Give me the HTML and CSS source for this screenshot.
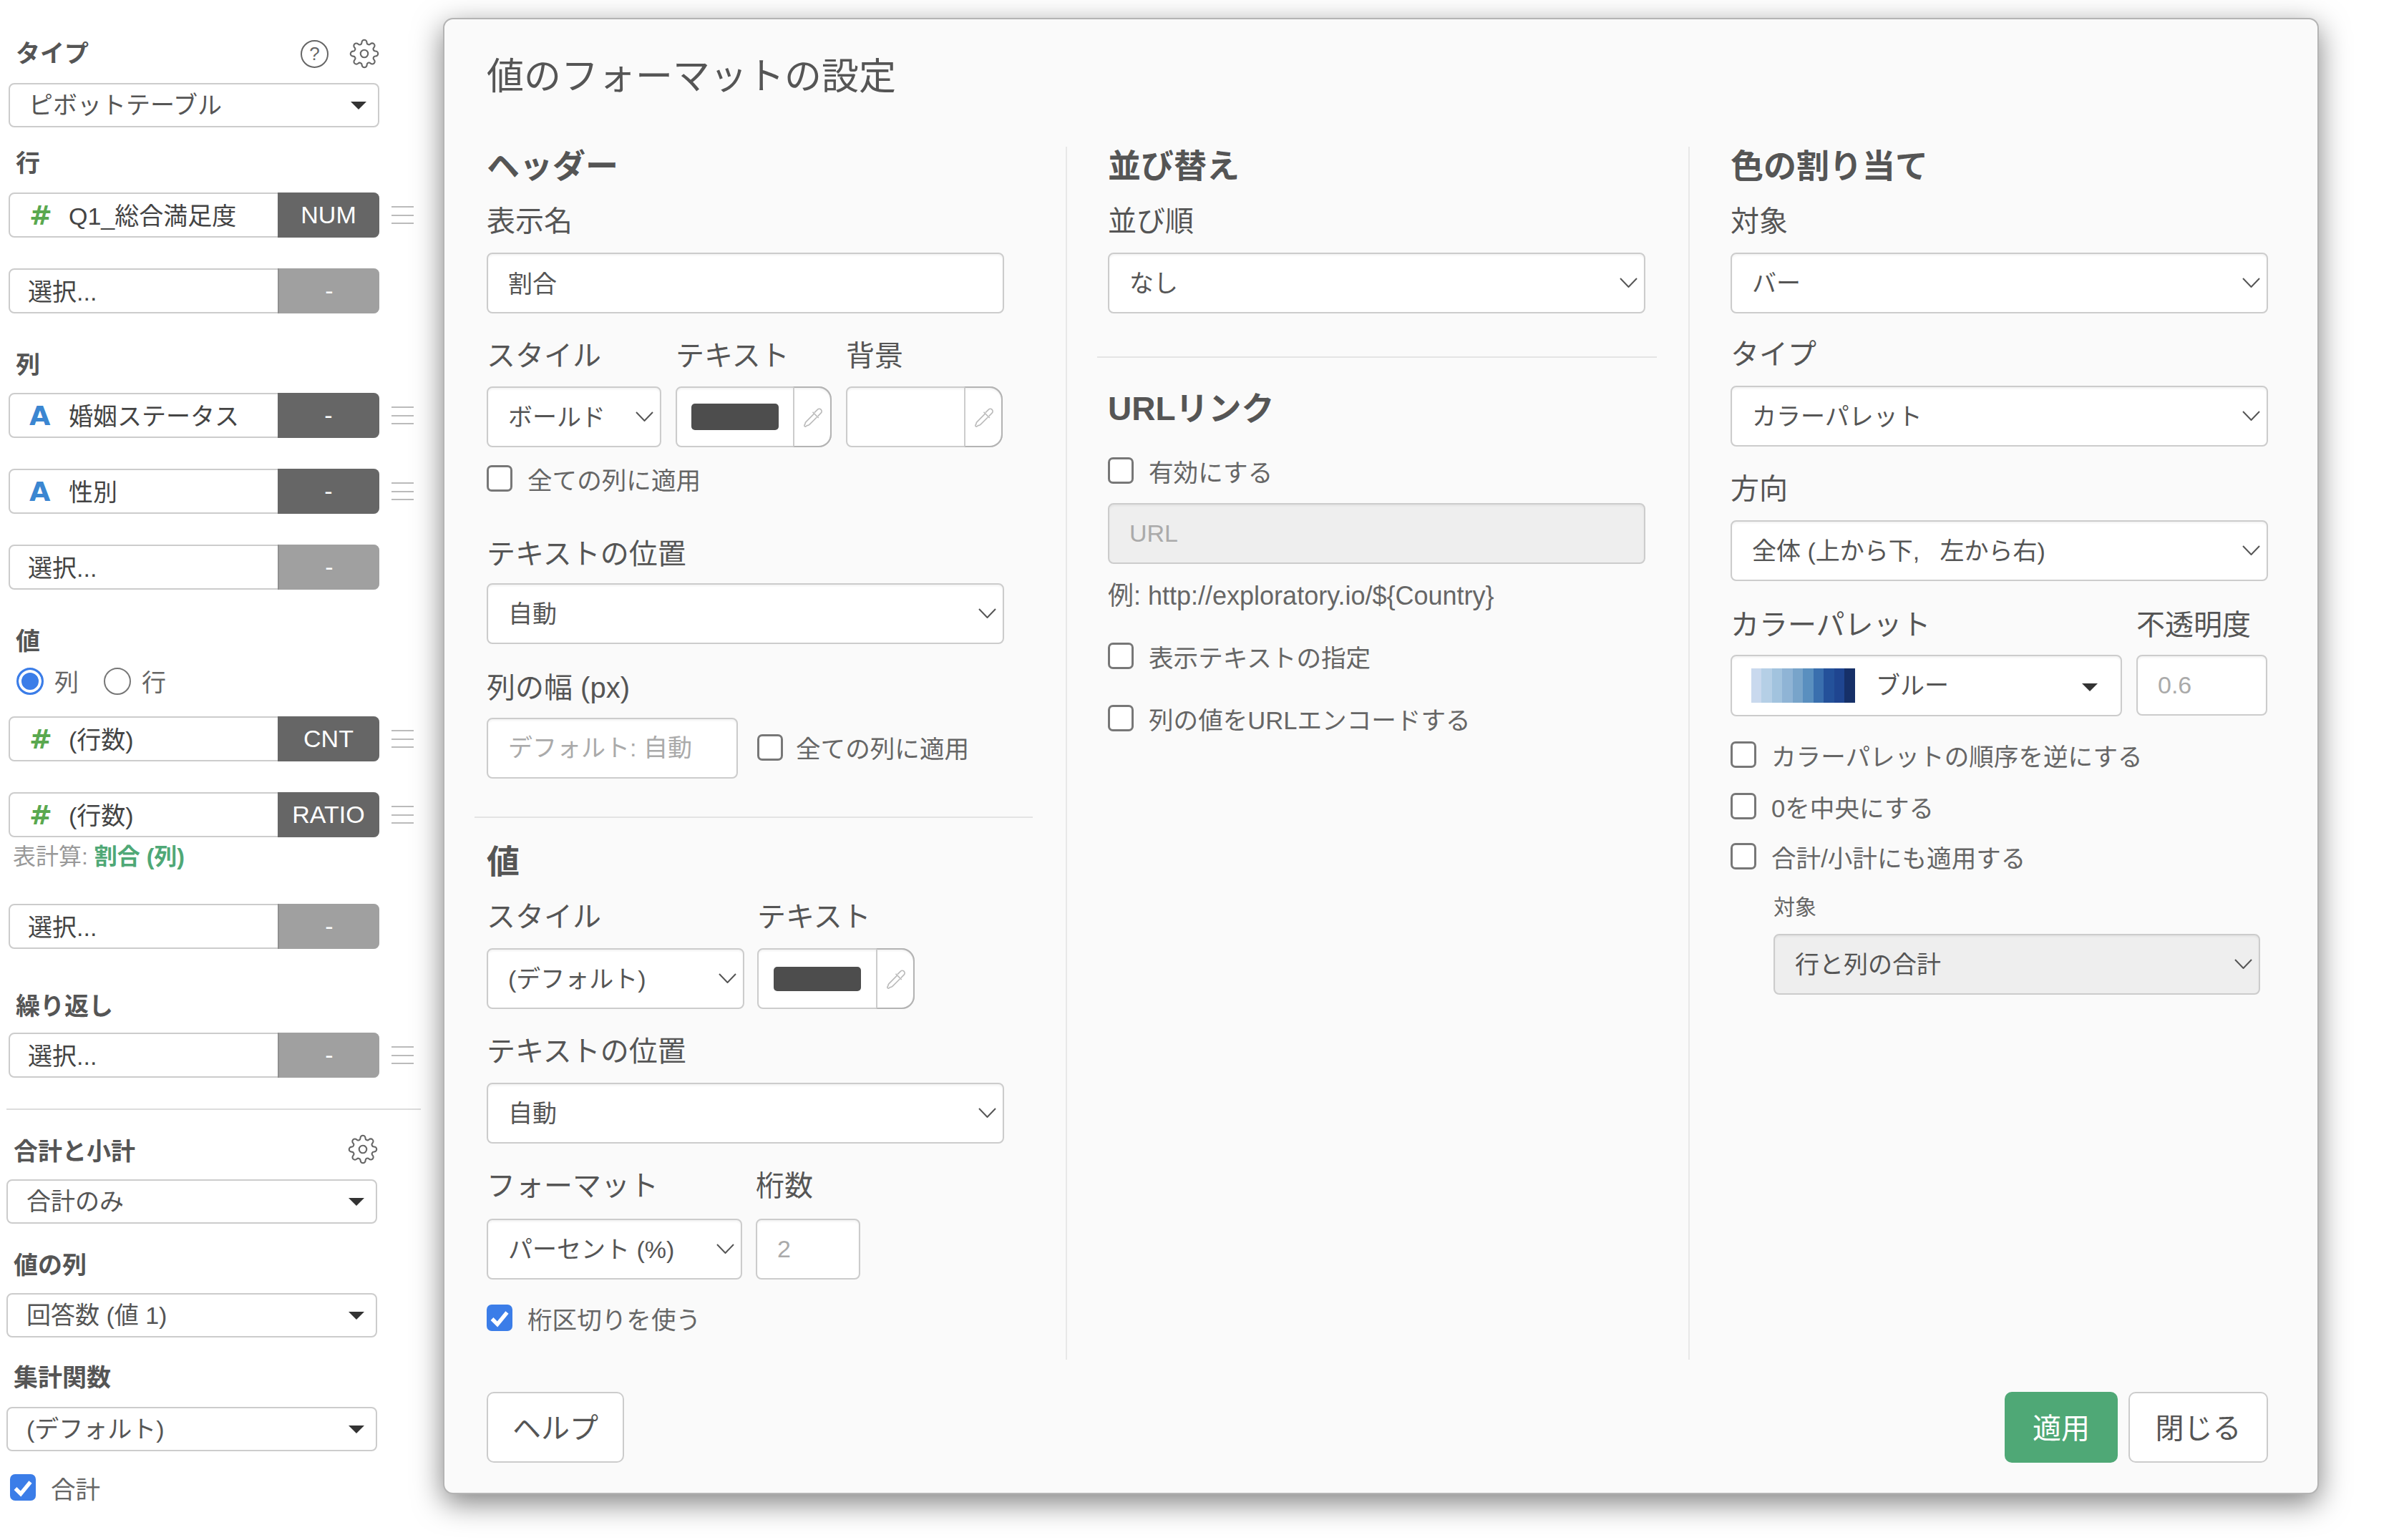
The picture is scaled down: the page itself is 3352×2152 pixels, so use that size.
FILE: index.html
```html
<!DOCTYPE html>
<html lang="ja">
<head>
  <meta charset="UTF-8" />
  <title>値のフォーマットの設定</title>
  <link rel="stylesheet" href="styles.css">
</head>
<body>

  <svg class="defs" width="0" height="0">
    <symbol id="gear" viewBox="0 0 24 24">
      <circle cx="12" cy="12" r="3" />
      <path d="M19.4 15a1.65 1.65 0 0 0 .33 1.82l.06.06a2 2 0 0 1 0 2.83 2 2 0 0 1-2.83 0l-.06-.06a1.65 1.65 0 0 0-1.82-.33 1.65 1.65 0 0 0-1 1.51V21a2 2 0 0 1-2 2 2 2 0 0 1-2-2v-.09A1.65 1.65 0 0 0 9 19.4a1.65 1.65 0 0 0-1.82.33l-.06.06a2 2 0 0 1-2.83 0 2 2 0 0 1 0-2.83l.06-.06a1.65 1.65 0 0 0 .33-1.82 1.65 1.65 0 0 0-1.51-1H3a2 2 0 0 1-2-2 2 2 0 0 1 2-2h.09A1.65 1.65 0 0 0 4.6 9a1.65 1.65 0 0 0-.33-1.82l-.06-.06a2 2 0 0 1 0-2.83 2 2 0 0 1 2.83 0l.06.06a1.65 1.65 0 0 0 1.82.33H9a1.65 1.65 0 0 0 1-1.51V3a2 2 0 0 1 2-2 2 2 0 0 1 2 2v.09a1.65 1.65 0 0 0 1 1.51 1.65 1.65 0 0 0 1.82-.33l.06-.06a2 2 0 0 1 2.83 0 2 2 0 0 1 0 2.83l-.06.06a1.65 1.65 0 0 0-.33 1.82V9a1.65 1.65 0 0 0 1.51 1H21a2 2 0 0 1 2 2 2 2 0 0 1-2 2h-.09a1.65 1.65 0 0 0-1.51 1z" />
    </symbol>
    <symbol id="chevron" viewBox="0 0 25 14">
      <path d="M1 1l11.5 12L24 1" />
    </symbol>
    <symbol id="dropper" viewBox="0 0 32 32">
      <path d="M18.5 9.5L23 5a3.5 3.5 0 0 1 5 5l-4.5 4.5" />
      <path d="M16 8.5l8.5 8.5" />
      <path d="M18 11L6.5 22.5Q5 24 5 26l-1 1.5A1.5 1.5 0 0 0 6.5 29L8 28q2 0 3.5-1.5L22 16" />
    </symbol>
  </svg>

  <!-- panel izquierdo -->
  <aside class="sidebar">
    <div class="side-head">
      <h3 class="side-label">タイプ</h3>
      <span class="side-icons">
        <span class="help">?</span>
        <svg class="gear"><use href="#gear" /></svg>
      </span>
    </div>
    <div class="side-select mt-21">ピボットテーブル<i class="caret"></i></div>

    <h3 class="side-label mt-30">行</h3>
    <div class="pill-row mt-21">
      <div class="pill"><span class="type-num">#</span><span class="pill-name">Q1_総合満足度</span><span class="tag">NUM</span></div>
      <span class="handle"></span>
    </div>
    <div class="pill-row mt-43">
      <div class="pill"><span class="pill-empty">選択...</span><span class="tag off">-</span></div>
    </div>

    <h3 class="side-label mt-52">列</h3>
    <div class="pill-row mt-19">
      <div class="pill"><span class="type-str">A</span><span class="pill-name">婚姻ステータス</span><span class="tag">-</span></div>
      <span class="handle"></span>
    </div>
    <div class="pill-row mt-43">
      <div class="pill"><span class="type-str">A</span><span class="pill-name">性別</span><span class="tag">-</span></div>
      <span class="handle"></span>
    </div>
    <div class="pill-row mt-43">
      <div class="pill"><span class="pill-empty">選択...</span><span class="tag off">-</span></div>
    </div>

    <h3 class="side-label mt-52">値</h3>
    <div class="radios mt-17">
      <span class="radio on"></span><span class="radio-text">列</span>
      <span class="radio"></span><span class="radio-text">行</span>
    </div>
    <div class="pill-row mt-31">
      <div class="pill"><span class="type-num">#</span><span class="pill-name">(行数)</span><span class="tag">CNT</span></div>
      <span class="handle"></span>
    </div>
    <div class="pill-row mt-43">
      <div class="pill"><span class="type-num">#</span><span class="pill-name">(行数)</span><span class="tag">RATIO</span></div>
      <span class="handle"></span>
    </div>
    <div class="calc-note">表計算: <strong>割合 (列)</strong></div>
    <div class="pill-row mt-52">
      <div class="pill"><span class="pill-empty">選択...</span><span class="tag off">-</span></div>
    </div>

    <h3 class="side-label mt-60">繰り返し</h3>
    <div class="pill-row mt-17">
      <div class="pill"><span class="pill-empty">選択...</span><span class="tag off">-</span></div>
      <span class="handle"></span>
    </div>

    <hr class="side-rule">

    <div class="totals">
      <div class="side-head">
        <h3 class="side-label">合計と小計</h3>
        <svg class="gear totals-gear"><use href="#gear" /></svg>
      </div>
      <div class="side-select mt-19">合計のみ<i class="caret"></i></div>
      <h3 class="side-label mt-38">値の列</h3>
      <div class="side-select mt-19">回答数 (値 1)<i class="caret"></i></div>
      <h3 class="side-label mt-36">集計関数</h3>
      <div class="side-select mt-21">(デフォルト)<i class="caret"></i></div>
      <label class="check-row side-check">
        <span class="check on"><svg viewBox="0 0 24 24"><path d="M5 13l5 5 9-11" /></svg></span>
        合計
      </label>
    </div>
  </aside>

  <!-- dialogo -->
  <section class="modal">
    <h2 class="modal-title">値のフォーマットの設定</h2>

    <div class="columns">
      <div class="col col-first">
        <h3 class="heading">ヘッダー</h3>
        <div class="label mt-27">表示名</div>
        <input class="field field-value mt-21" value="割合">

        <div class="grid-header mt-34">
          <div>
            <div class="label">スタイル</div>
            <div class="field select mt-20">ボールド<svg class="chev"><use href="#chevron" /></svg></div>
          </div>
          <div>
            <div class="label">テキスト</div>
            <div class="field picker mt-20">
              <span class="swatch-wrap"><i class="swatch"></i></span>
              <span class="drop"><svg><use href="#dropper" /></svg></span>
            </div>
          </div>
          <div>
            <div class="label">背景</div>
            <div class="field picker mt-20">
              <span class="swatch-wrap"></span>
              <span class="drop"><svg><use href="#dropper" /></svg></span>
            </div>
          </div>
        </div>
        <label class="check-row mt-25"><span class="check"></span>全ての列に適用</label>

        <div class="label mt-62">テキストの位置</div>
        <div class="field select mt-18">自動<svg class="chev"><use href="#chevron" /></svg></div>

        <div class="label mt-36">列の幅 (px)</div>
        <div class="width-row mt-19">
          <input class="field width-input" placeholder="デフォルト: 自動">
          <label class="check-row"><span class="check"></span>全ての列に適用</label>
        </div>

        <hr class="rule rule-first">

        <h3 class="heading mt-34">値</h3>
        <div class="grid-value mt-27">
          <div>
            <div class="label">スタイル</div>
            <div class="field select mt-21">(デフォルト)<svg class="chev"><use href="#chevron" /></svg></div>
          </div>
          <div>
            <div class="label">テキスト</div>
            <div class="field picker mt-21">
              <span class="swatch-wrap"><i class="swatch"></i></span>
              <span class="drop"><svg><use href="#dropper" /></svg></span>
            </div>
          </div>
        </div>

        <div class="label mt-34">テキストの位置</div>
        <div class="field select mt-21">自動<svg class="chev"><use href="#chevron" /></svg></div>

        <div class="grid-format mt-34">
          <div>
            <div class="label">フォーマット</div>
            <div class="field select mt-23">パーセント (%)<svg class="chev"><use href="#chevron" /></svg></div>
          </div>
          <div>
            <div class="label">桁数</div>
            <input class="field mt-23" placeholder="2">
          </div>
        </div>
        <label class="check-row mt-35">
          <span class="check on"><svg viewBox="0 0 24 24"><path d="M5 13l5 5 9-11" /></svg></span>
          桁区切りを使う
        </label>
      </div>

      <div class="col col-second">
        <h3 class="heading">並び替え</h3>
        <div class="label mt-27">並び順</div>
        <div class="field select mt-21">なし<svg class="chev"><use href="#chevron" /></svg></div>

        <hr class="rule rule-second">

        <h3 class="heading mt-44">URLリンク</h3>
        <label class="check-row mt-43"><span class="check"></span>有効にする</label>
        <input class="field disabled mt-27" placeholder="URL" disabled>
        <div class="example">例: http://exploratory.io/${Country}</div>
        <label class="check-row mt-41"><span class="check"></span>表示テキストの指定</label>
        <label class="check-row mt-50"><span class="check"></span>列の値をURLエンコードする</label>
      </div>

      <div class="col col-third">
        <h3 class="heading">色の割り当て</h3>
        <div class="label mt-27">対象</div>
        <div class="field select mt-21">バー<svg class="chev"><use href="#chevron" /></svg></div>

        <div class="label mt-32">タイプ</div>
        <div class="field select mt-21">カラーパレット<svg class="chev"><use href="#chevron" /></svg></div>

        <div class="label mt-34">方向</div>
        <div class="field select mt-21">全体 (上から下, &nbsp;&nbsp;左から右)<svg class="chev"><use href="#chevron" /></svg></div>

        <div class="grid-palette mt-36">
          <div>
            <div class="label">カラーパレット</div>
            <div class="field palette mt-19"><i class="ramp"></i>ブルー<i class="caret"></i></div>
          </div>
          <div>
            <div class="label">不透明度</div>
            <input class="field mt-19" placeholder="0.6">
          </div>
        </div>

        <label class="check-row mt-35"><span class="check"></span>カラーパレットの順序を逆にする</label>
        <label class="check-row mt-35"><span class="check"></span>0を中央にする</label>
        <label class="check-row mt-33"><span class="check"></span>合計/小計にも適用する</label>

        <div class="sub-block">
          <div class="sub-label">対象</div>
          <div class="field select disabled mt-17">行と列の合計<svg class="chev"><use href="#chevron" /></svg></div>
        </div>
      </div>
    </div>

    <div class="modal-foot">
      <button class="btn btn-help">ヘルプ</button>
      <div class="foot-right">
        <button class="btn btn-apply">適用</button>
        <button class="btn btn-close">閉じる</button>
      </div>
    </div>
  </section>

</body>
</html>
```

FILE: styles.css
```css
* {
  box-sizing: border-box;
}
body {
  margin: 0;
  width: 3352px;
  height: 2152px;
  display: flex;
  overflow: hidden;
  background: #fff;
  color: #555;
  font-family: "Liberation Sans", "Noto Sans CJK JP", sans-serif;
  font-size: 34px;
}
.defs {
  position: absolute;
}
h2, h3 {
  margin: 0;
}

/* margenes */
.mt-17 { margin-top: 17px; }
.mt-18 { margin-top: 18px; }
.mt-19 { margin-top: 19px; }
.mt-20 { margin-top: 20px; }
.mt-21 { margin-top: 21px; }
.mt-23 { margin-top: 23px; }
.mt-25 { margin-top: 25px; }
.mt-27 { margin-top: 27px; }
.mt-30 { margin-top: 30px; }
.mt-31 { margin-top: 31px; }
.mt-32 { margin-top: 32px; }
.mt-33 { margin-top: 33px; }
.mt-34 { margin-top: 34px; }
.mt-35 { margin-top: 35px; }
.mt-36 { margin-top: 36px; }
.mt-38 { margin-top: 38px; }
.mt-41 { margin-top: 41px; }
.mt-43 { margin-top: 43px; }
.mt-44 { margin-top: 44px; }
.mt-50 { margin-top: 50px; }
.mt-52 { margin-top: 52px; }
.mt-60 { margin-top: 60px; }
.mt-62 { margin-top: 62px; }

/* panel izquierdo */
.sidebar {
  width: 619px;
  flex: none;
  padding: 55px 0 0 12px;
}
.side-head {
  display: flex;
  justify-content: space-between;
  align-items: center;
  width: 518px;
  height: 40px;
}
.side-label {
  padding-left: 10px;
  font-size: 34px;
  line-height: 40px;
  font-weight: bold;
  color: #555;
}
.side-icons {
  display: flex;
  align-items: center;
  gap: 29px;
}
.help {
  width: 39px;
  height: 39px;
  border: 2px solid #666;
  border-radius: 50%;
  text-align: center;
  font-size: 26px;
  line-height: 35px;
  color: #666;
}
.gear {
  width: 42px;
  height: 42px;
  fill: none;
  stroke: #666;
  stroke-width: 1.2;
}
.side-select {
  position: relative;
  width: 518px;
  height: 62px;
  padding-left: 26px;
  border: 2px solid #ccc;
  border-radius: 8px;
  line-height: 58px;
  color: #555;
  background: #fff;
}
.caret {
  position: absolute;
  right: 16px;
  top: 24px;
  border-left: 11px solid transparent;
  border-right: 11px solid transparent;
  border-top: 11px solid #333;
}
.pill-row {
  display: flex;
  align-items: center;
}
.pill {
  display: flex;
  align-items: center;
  width: 518px;
  height: 63px;
  border: 2px solid #ccc;
  border-radius: 8px;
  background: #fff;
  color: #444;
}
.type-num, .type-str {
  width: 82px;
  padding-left: 27px;
  font-family: "DejaVu Sans", sans-serif;
  font-weight: bold;
  font-size: 38px;
}
.type-num {
  color: #5aa84f;
}
.type-str {
  color: #3b86d1;
}
.pill-name {
  flex: 1;
  padding-bottom: 2px;
  white-space: nowrap;
}
.pill-empty {
  flex: 1;
  padding: 0 0 2px 25px;
}
.tag {
  align-self: stretch;
  width: 142px;
  margin: -2px -2px -2px 0;
  border-radius: 0 8px 8px 0;
  background: #666;
  color: #fff;
  text-align: center;
  line-height: 63px;
}
.tag.off {
  background: #a0a0a0;
  border-left: 2px solid #8f8f8f;
}
.handle {
  width: 31px;
  height: 25px;
  margin-left: 17px;
  border-top: 2px solid #bbb;
  border-bottom: 2px solid #bbb;
  background: linear-gradient(#bbb, #bbb) center / 100% 2px no-repeat;
}
.radios {
  display: flex;
  align-items: center;
  height: 37px;
  padding-left: 11px;
}
.radio {
  width: 38px;
  height: 38px;
  border: 2px solid #777;
  border-radius: 50%;
}
.radio.on {
  border: 3px solid #3b7de8;
  background: #3b7de8;
  box-shadow: inset 0 0 0 4px #fff;
}
.radio-text {
  width: 84px;
  padding-left: 15px;
  color: #666;
}
.calc-note {
  height: 30px;
  margin-top: 11px;
  padding-left: 6px;
  font-size: 32px;
  line-height: 32px;
  color: #999;
}
.calc-note strong {
  color: #4fa876;
}
.side-rule {
  width: 579px;
  margin: 43px 0 0 -3px;
  border: 0;
  border-top: 2px solid #ddd;
}
.totals {
  margin: 38px 0 0 -3px;
}
.totals-gear {
  margin: 0 -1px 6px 0;
}
.side-check {
  margin-top: 32px;
  padding-left: 5px;
  gap: 20px;
}

/* dialogo */
.modal {
  width: 2621px;
  height: 2063px;
  margin-top: 25px;
  padding: 50px 70px 0 42px;
  flex: none;
  border: 2px solid #b4b4b4;
  border-radius: 14px;
  background: #fafafa;
  box-shadow: 0 12px 40px rgba(0, 0, 0, 0.5);
}
.modal-title {
  height: 60px;
  padding-left: 17px;
  font-size: 52px;
  line-height: 60px;
  font-weight: normal;
  color: #555;
}
.columns {
  display: flex;
  height: 1695px;
  margin-top: 68px;
}
.col {
  flex: none;
}
.col-first {
  width: 828px;
  padding: 0 86px 0 17px;
  border-right: 2px solid #e8e8e8;
}
.col-second {
  width: 870px;
  padding: 0 60px 0 57px;
  border-right: 2px solid #e8e8e8;
}
.col-third {
  width: 808px;
  padding-left: 57px;
}
.heading {
  height: 52px;
  font-size: 46px;
  line-height: 54px;
  font-weight: bold;
  color: #555;
}
.label {
  height: 48px;
  font-size: 40px;
  line-height: 51px;
  color: #555;
  white-space: nowrap;
}
.field {
  display: block;
  width: 100%;
  height: 85px;
  padding: 0 28px;
  border: 2px solid #ccc;
  border-radius: 8px;
  background: #fff;
  box-shadow: inset 0 2px 3px rgba(0, 0, 0, 0.05);
  font: inherit;
  color: #555;
  line-height: 83px;
  outline: none;
}
.field-value {
  padding-bottom: 3px;
}
.field::placeholder {
  color: #aaa;
  opacity: 1;
}
.field.disabled {
  background: #eee;
}
.select {
  position: relative;
  white-space: nowrap;
}
.chev {
  position: absolute;
  right: 9px;
  top: 33px;
  width: 25px;
  height: 14px;
  fill: none;
  stroke: #555;
  stroke-width: 2;
}
.grid-header {
  display: grid;
  grid-template-columns: 244px 218px 219px;
  column-gap: 20px;
}
.grid-value {
  display: grid;
  grid-template-columns: 360px 220px;
  column-gap: 18px;
}
.grid-format {
  display: grid;
  grid-template-columns: 357px 146px;
  column-gap: 19px;
}
.grid-palette {
  display: grid;
  grid-template-columns: 547px 183px;
  column-gap: 20px;
}
.picker {
  display: flex;
  padding: 0;
  border-radius: 8px 18px 18px 8px;
}
.swatch-wrap {
  flex: 1;
  display: flex;
  align-items: center;
  justify-content: center;
}
.swatch {
  width: 122px;
  height: 37px;
  border-radius: 5px;
  background: #4d4d4d;
}
.grid-value .swatch {
  height: 34px;
}
.drop {
  width: 54px;
  margin: -2px -2px -2px 0;
  display: flex;
  align-items: center;
  justify-content: center;
  border: 2px solid #b4b4b4;
  border-left-color: #ccc;
  border-radius: 0 18px 18px 0;
}
.drop svg {
  width: 31px;
  height: 32px;
  fill: none;
  stroke: #bbb;
  stroke-width: 1.7;
}
.check-row {
  display: flex;
  align-items: center;
  gap: 21px;
  height: 37px;
  font-size: 34.6px;
  color: #666;
  white-space: nowrap;
}
.check {
  flex: none;
  width: 36px;
  height: 37px;
  border: 3px solid #777;
  border-radius: 7px;
  background: #fff;
}
.check.on {
  border: 0;
  background: #3b7de8;
}
.check svg {
  display: block;
  width: 100%;
  height: 100%;
  fill: none;
  stroke: #fff;
  stroke-width: 3.6;
}
.width-row {
  display: flex;
  align-items: center;
  gap: 27px;
}
.width-input {
  width: 351px;
}
.width-row .check-row {
  gap: 18px;
  margin-bottom: 3px;
}
.rule {
  margin: 0;
  border: 0;
  border-top: 2px solid #e4e4e4;
}
.rule-first {
  width: 780px;
  margin: 53px 0 0 -17px;
}
.rule-second {
  width: 782px;
  margin: 60px 0 0 -15px;
}
.example {
  height: 48px;
  margin-top: 21px;
  line-height: 48px;
  font-size: 36px;
  color: #666;
}
.palette {
  position: relative;
  display: flex;
  align-items: center;
  height: 86px;
  padding-left: 27px;
}
.palette .caret {
  right: 32px;
  top: 38px;
}
.ramp {
  width: 145px;
  height: 48px;
  margin-right: 29px;
  background: linear-gradient(90deg,
    #c9d9ee 10%, #b5cfe6 10% 20%, #a2c3de 20% 30%, #8fb4d5 30% 40%, #78a4ca 40% 50%,
    #5a8fbf 50% 60%, #3a6fae 60% 70%, #24519a 70% 80%, #1f4590 80% 90%, #163068 90%);
}
.sub-block {
  margin: 33px 11px 0 60px;
}
.sub-label {
  height: 40px;
  font-size: 30px;
  line-height: 40px;
  color: #666;
}
.modal-foot {
  display: flex;
  justify-content: space-between;
  width: 2489px;
  margin: 45px 0 0 17px;
}
.foot-right {
  display: flex;
  gap: 15px;
}
.btn {
  height: 99px;
  padding-bottom: 4px;
  border: 2px solid #ccc;
  border-radius: 10px;
  background: #fff;
  font: inherit;
  font-size: 40px;
  color: #555;
}
.btn-help {
  width: 192px;
}
.btn-apply {
  width: 158px;
  border: 0;
  background: #4fa876;
  color: #fff;
}
.btn-close {
  width: 195px;
}
```
